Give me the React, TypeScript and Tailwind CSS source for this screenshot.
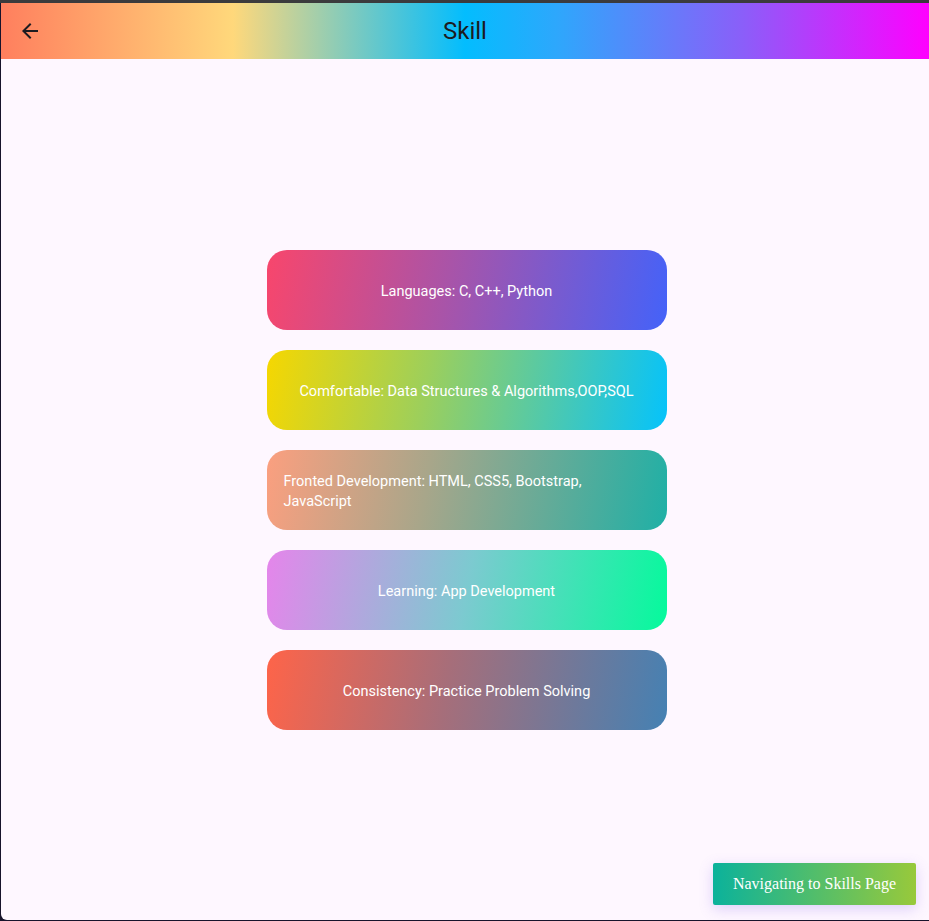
const skills = [
    { text: 'Languages: C, C++, Python', bg: 'bg-[linear-gradient(100deg,#f8466c_0%,#a954a8_45%,#4462f9_100%)]' },
    { text: 'Comfortable: Data Structures & Algorithms,OOP,SQL', bg: 'bg-[linear-gradient(100deg,#f6d700_0%,#9ccf5c_40%,#05c3fb_100%)]' },
    { text: 'Fronted Development: HTML, CSS5, Bootstrap, JavaScript', bg: 'bg-[linear-gradient(100deg,#fb9f7f_0%,#a8a68a_40%,#1fb0a6_100%)]' },
    { text: 'Learning: App Development', bg: 'bg-[linear-gradient(100deg,#e585eb_0%,#7ccad0_50%,#05fa9c_100%)]' },
    { text: 'Consistency: Practice Problem Solving', bg: 'bg-[linear-gradient(100deg,#fe6449_0%,#a66e7a_45%,#4581b3_100%)]' },
]

export default function App () {

    return (
        <div className='flex h-[921px] w-full flex-col bg-[#17132b] font-["Roboto",sans-serif]'>
            <div className='h-[3px] bg-[#3b3b3d]'></div>
            <div className='relative ml-[1px] mb-[1px] flex flex-1 flex-col overflow-hidden rounded-bl-[6px] bg-[#fef7ff]'>
                <header className='relative flex h-[56px] items-center bg-[linear-gradient(90deg,#ff7f5e_0%,#ffd87b_25%,#03bdfe_50%,#2ea7fc_60%,#8b5ef9_80%,#ff00ff_100%)] pl-[17px]'>
                    <svg width='24' height='24' viewBox='0 0 24 24' className='fill-[#1d1b20]'>
                        <path d='M20 11H7.83l5.59-5.59L12 4l-8 8 8 8 1.41-1.41L7.83 13H20v-2z' />
                    </svg>
                    <h1 className='absolute left-0 right-0 text-center text-[24px] text-[#1d1b20]'>Skill</h1>
                </header>

                <main className='flex flex-col items-center gap-[20px] pl-[3px] pt-[191px]'>
                    {skills.map((s) => (
                        <div key={s.text} className={`flex h-[80px] w-[400px] items-center justify-center rounded-[20px] px-[17px] pt-[3px] text-[14.5px] leading-[20px] text-white ${s.bg}`}>
                            <span>{s.text}</span>
                        </div>
                    ))}
                </main>

                <div className='absolute bottom-[15px] right-[13px] flex h-[42px] w-[203px] items-center justify-center rounded-[2px] bg-[linear-gradient(90deg,#0bb29b_0%,#98c93b_100%)] font-["Liberation_Serif",serif] text-[16px] text-white shadow-[0_4px_14px_rgba(120,90,230,0.25)]'>
                    Navigating to Skills Page
                </div>
            </div>
        </div>
    )
};
